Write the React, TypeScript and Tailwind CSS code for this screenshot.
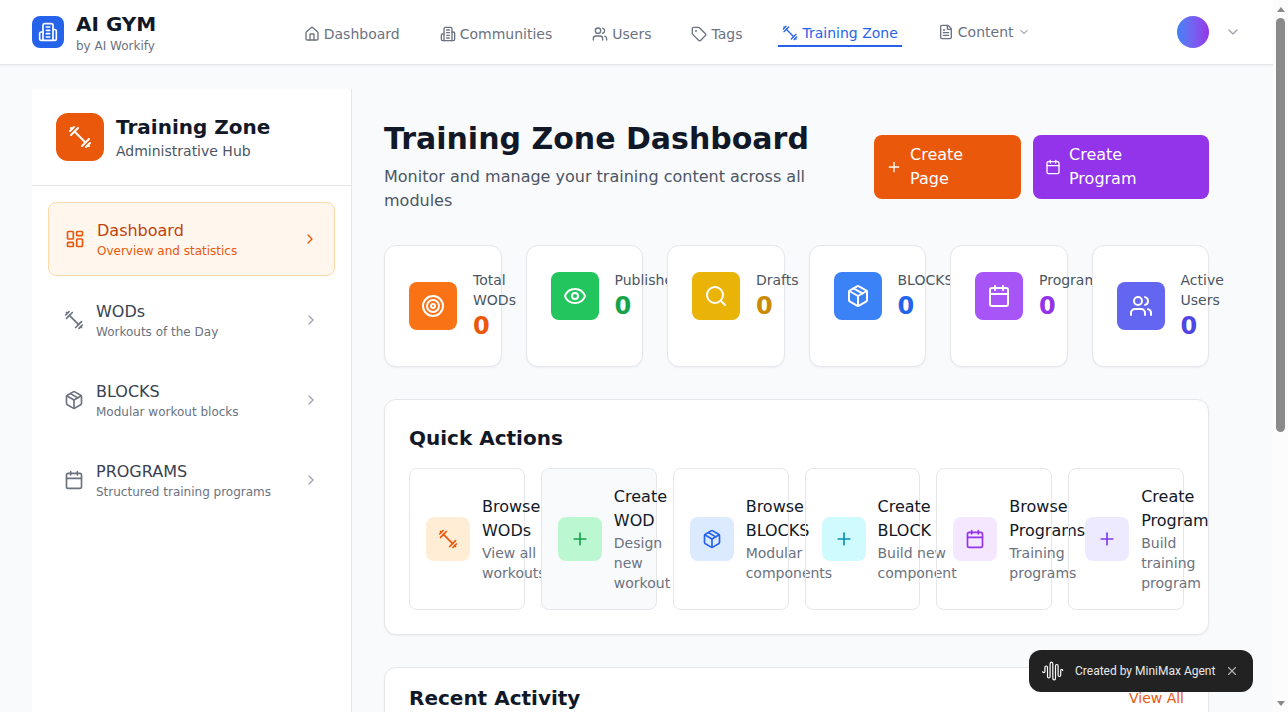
import React from "react";
import { Home, Users, Tag, FileText, ChevronDown, ChevronRight, LayoutDashboard, Package, Calendar, Target, Eye, Search, Plus, X } from "lucide-react";

function Dumbbell({ className }: { className?: string }) {
  return (
    <svg className={className} viewBox="0 0 24 24" fill="none" stroke="currentColor" strokeWidth={2} strokeLinecap="round" strokeLinejoin="round">
      <path d="m6.5 6.5 11 11" />
      <path d="m21 21-1-1" />
      <path d="m3 3 1 1" />
      <path d="m18 22 4-4" />
      <path d="m2 6 4-4" />
      <path d="m3 10 7-7" />
      <path d="m14 21 7-7" />
    </svg>
  );
}

function Building2({ className }: { className?: string }) {
  return (
    <svg className={className} viewBox="0 0 24 24" fill="none" stroke="currentColor" strokeWidth={2} strokeLinecap="round" strokeLinejoin="round">
      <path d="M6 22V4a2 2 0 0 1 2-2h8a2 2 0 0 1 2 2v18Z" />
      <path d="M6 12H4a2 2 0 0 0-2 2v6a2 2 0 0 0 2 2h2" />
      <path d="M18 9h2a2 2 0 0 1 2 2v9a2 2 0 0 1-2 2h-2" />
      <path d="M10 6h4" />
      <path d="M10 10h4" />
      <path d="M10 14h4" />
      <path d="M10 18h4" />
    </svg>
  );
}

function Wave({ className }: { className?: string }) {
  return (
    <svg className={className} viewBox="0 0 24 20" fill="none" stroke="currentColor" strokeWidth={1.2} strokeLinecap="round">
      <path d="M0.7 10.5c0 1.5 2.2 1.5 2.2 0V6.5c0-2 2.6-2 2.6 0v9c0 2 2.6 2 2.6 0V3c0-2.6 2.7-2.6 2.7 0v14c0 2.6 2.7 2.6 2.7 0V5c0-2 2.6-2 2.6 0v9c0 2 2.6 2 2.6 0V9.5c0-1.5 2-1.5 2 0" />
    </svg>
  );
}

const topNav = [
  { label: "Dashboard", Icon: Home },
  { label: "Communities", Icon: Building2 },
  { label: "Users", Icon: Users },
  { label: "Tags", Icon: Tag },
];

const sideNav = [
  { title: "WODs", sub: "Workouts of the Day", Icon: Dumbbell },
  { title: "BLOCKS", sub: "Modular workout blocks", Icon: Package },
  { title: "PROGRAMS", sub: "Structured training programs", Icon: Calendar },
];

const stats = [
  { label: "Total WODs", Icon: Target, bg: "bg-[#f97316]", fg: "text-[#ea580c]" },
  { label: "Published", Icon: Eye, bg: "bg-[#22c55e]", fg: "text-[#16a34a]" },
  { label: "Drafts", Icon: Search, bg: "bg-[#eab308]", fg: "text-[#ca8a04]" },
  { label: "BLOCKS", Icon: Package, bg: "bg-[#3b82f6]", fg: "text-[#2563eb]" },
  { label: "Programs", Icon: Calendar, bg: "bg-[#a855f7]", fg: "text-[#9333ea]" },
  { label: "Active Users", Icon: Users, bg: "bg-[#6366f1]", fg: "text-[#4f46e5]" },
];

const actions = [
  { title: "Browse WODs", sub: "View all workouts", Icon: Dumbbell, box: "bg-[#ffedd5] text-[#ea580c]", card: "" },
  { title: "Create WOD", sub: "Design new workout", Icon: Plus, box: "bg-[#bbf7d0] text-[#16a34a]", card: "bg-[#f9fafb] isolate" },
  { title: "Browse BLOCKS", sub: "Modular components", Icon: Package, box: "bg-[#dbeafe] text-[#2563eb]", card: "" },
  { title: "Create BLOCK", sub: "Build new component", Icon: Plus, box: "bg-[#cffafe] text-[#0891b2]", card: "" },
  { title: "Browse Programs", sub: "Training programs", Icon: Calendar, box: "bg-[#f3e8ff] text-[#9333ea]", card: "" },
  { title: "Create Program", sub: "Build training program", Icon: Plus, box: "bg-[#ede9fe] text-[#7c3aed]", card: "" },
];

const softShadow = "shadow-[0_1px_2px_0_rgba(0,0,0,0.05)]";

export default function App() {
  return (
    <div className="min-h-screen bg-[#f9fafb] pr-[15px] [font-family:'DejaVu_Sans',sans-serif]">
      <header className={`flex h-[65px] items-center justify-between border-b border-[#e5e7eb] bg-white px-8 ${softShadow}`}>
        <div className="flex items-center gap-3">
          <div className="flex h-8 w-8 items-center justify-center rounded-lg bg-[#2563eb] text-white">
            <Building2 className="h-5 w-5" />
          </div>
          <div>
            <div className="text-xl font-bold text-[#111827]">AI GYM</div>
            <div className="text-xs text-[#6b7280]">by AI Workify</div>
          </div>
        </div>
        <nav className="flex items-center gap-8">
          {topNav.map(({ label, Icon }) => (
            <a key={label} className="flex items-center gap-1 px-1 pt-1 text-sm text-[#6b7280]">
              <Icon className="h-4 w-4" />
              {label}
            </a>
          ))}
          <a className="flex items-center gap-1 border-b-2 border-[#2563eb] px-1 pt-[6px] pb-[2px] text-sm text-[#2563eb]">
            <Dumbbell className="h-4 w-4" />
            Training Zone
          </a>
          <a className="flex items-center gap-1 px-1 text-sm text-[#6b7280]">
            <FileText className="h-4 w-4" />
            Content
            <ChevronDown className="h-3 w-3" />
          </a>
        </nav>
        <div className="flex items-center gap-4">
          <div className="h-8 w-8 rounded-full bg-gradient-to-r from-[#3b82f6] to-[#9333ea]" />
          <ChevronDown className="h-4 w-4 text-[#9ca3af]" />
        </div>
      </header>

      <div className="flex px-8 py-6">
        <aside className="w-80 shrink-0 border-r border-[#e5e7eb] bg-white">
          <div className="flex items-center gap-3 border-b border-[#e5e7eb] p-6">
            <div className="flex h-12 w-12 items-center justify-center rounded-xl bg-[#ea580c] text-white">
              <Dumbbell className="h-6 w-6" />
            </div>
            <div>
              <div className="text-xl font-bold text-[#111827]">Training Zone</div>
              <div className="text-sm text-[#4b5563]">Administrative Hub</div>
            </div>
          </div>
          <div className="flex flex-col gap-2 p-4">
            <div className="flex items-center gap-3 rounded-lg border border-[#fed7aa] bg-[#fff7ed] p-4">
              <LayoutDashboard className="h-5 w-5 text-[#ea580c]" />
              <div className="flex-1">
                <div className="text-base text-[#c2410c]">Dashboard</div>
                <div className="text-xs text-[#ea580c]">Overview and statistics</div>
              </div>
              <ChevronRight className="h-4 w-4 text-[#ea580c]" />
            </div>
            {sideNav.map(({ title, sub, Icon }) => (
              <div key={title} className="flex items-center gap-3 rounded-lg p-4">
                <Icon className="h-5 w-5 text-[#6b7280]" />
                <div className="flex-1">
                  <div className="text-base text-[#374151]">{title}</div>
                  <div className="text-xs text-[#6b7280]">{sub}</div>
                </div>
                <ChevronRight className="h-4 w-4 text-[#9ca3af]" />
              </div>
            ))}
          </div>
        </aside>

        <main className="min-w-0 flex-1 p-8">
          <div className="mb-8 flex items-center justify-between gap-0">
            <div className="w-[430px]">
              <h1 className="mb-2 text-3xl font-bold text-[#111827]">Training Zone Dashboard</h1>
              <p className="text-base text-[#4b5563]">Monitor and manage your training content across all modules</p>
            </div>
            <div className="flex gap-3">
              <button className="flex w-[147px] items-center gap-2 rounded-lg bg-[#ea580c] px-3 py-2 text-left text-base text-white">
                <Plus className="h-4 w-4 shrink-0" />
                <span className="w-min">Create Page</span>
              </button>
              <button className="flex w-[176px] items-center gap-2 rounded-lg bg-[#9333ea] px-3 py-2 text-left text-base text-white">
                <Calendar className="h-4 w-4 shrink-0" />
                <span className="w-min">Create Program</span>
              </button>
            </div>
          </div>

          <div className="mb-8 grid grid-cols-6 gap-6">
            {stats.map(({ label, Icon, bg, fg }) => (
              <div key={label} className={`isolate rounded-xl border border-[#e5e7eb] bg-white p-6 ${softShadow}`}>
                <div className="flex items-center gap-4">
                  <div className={`flex h-12 w-12 shrink-0 items-center justify-center rounded-lg text-white ${bg}`}>
                    <Icon className="h-6 w-6" />
                  </div>
                  <div>
                    <div className="text-sm text-[#4b5563]">{label}</div>
                    <div className={`text-2xl font-bold ${fg}`}>0</div>
                  </div>
                </div>
              </div>
            ))}
          </div>

          <section className={`mb-8 rounded-xl border border-[#e5e7eb] bg-white p-6 ${softShadow}`}>
            <h2 className="mb-4 text-xl font-semibold text-[#111827]">Quick Actions</h2>
            <div className="grid grid-cols-6 gap-4">
              {actions.map(({ title, sub, Icon, box, card }) => (
                <div key={title} className={`flex items-center gap-3 rounded-lg border border-[#e5e7eb] p-4 ${card}`}>
                  <div className={`flex h-11 w-11 shrink-0 items-center justify-center rounded-lg ${box}`}>
                    <Icon className="h-5 w-5" />
                  </div>
                  <div>
                    <div className="text-base text-[#111827]">{title}</div>
                    <div className="text-sm text-[#6b7280]">{sub}</div>
                  </div>
                </div>
              ))}
            </div>
          </section>

          <section className={`min-h-[443px] rounded-xl border border-[#e5e7eb] bg-white px-6 py-4 ${softShadow}`}>
            <div className="flex items-center justify-between">
              <h2 className="text-xl font-semibold text-[#111827]">Recent Activity</h2>
              <a className="text-sm text-[#ea580c]">View All</a>
            </div>
          </section>
        </main>
      </div>

      <div className="fixed top-0 right-0 bottom-0 flex w-[15px] flex-col items-center bg-[#fcfcfc]">
        <div className="flex h-[18px] w-full shrink-0 items-center justify-center">
          <div className="h-0 w-0 border-r-[4px] border-b-[5px] border-l-[4px] border-r-transparent border-b-[#8a8a8a] border-l-transparent" />
        </div>
        <div className="h-[414px] w-[9px] shrink-0 rounded-[5px] bg-[#8a8a8a]" />
        <div className="flex-1" />
        <div className="flex h-[17px] w-full shrink-0 items-center justify-center">
          <div className="h-0 w-0 border-t-[5px] border-r-[4px] border-l-[4px] border-t-[#8a8a8a] border-r-transparent border-l-transparent" />
        </div>
      </div>

      <div className="fixed right-[35px] bottom-5 flex h-[42px] w-[224px] items-center rounded-xl bg-[#222222] pl-[13px] text-[#e8e8e8] [font-family:Roboto,sans-serif]">
        <Wave className="h-5 w-6 text-white" />
        <span className="ml-[9px] text-xs">Created by MiniMax Agent</span>
        <X className="ml-[10px] h-[14px] w-[14px] text-[#b0b0b0]" />
      </div>
    </div>
  );
}
